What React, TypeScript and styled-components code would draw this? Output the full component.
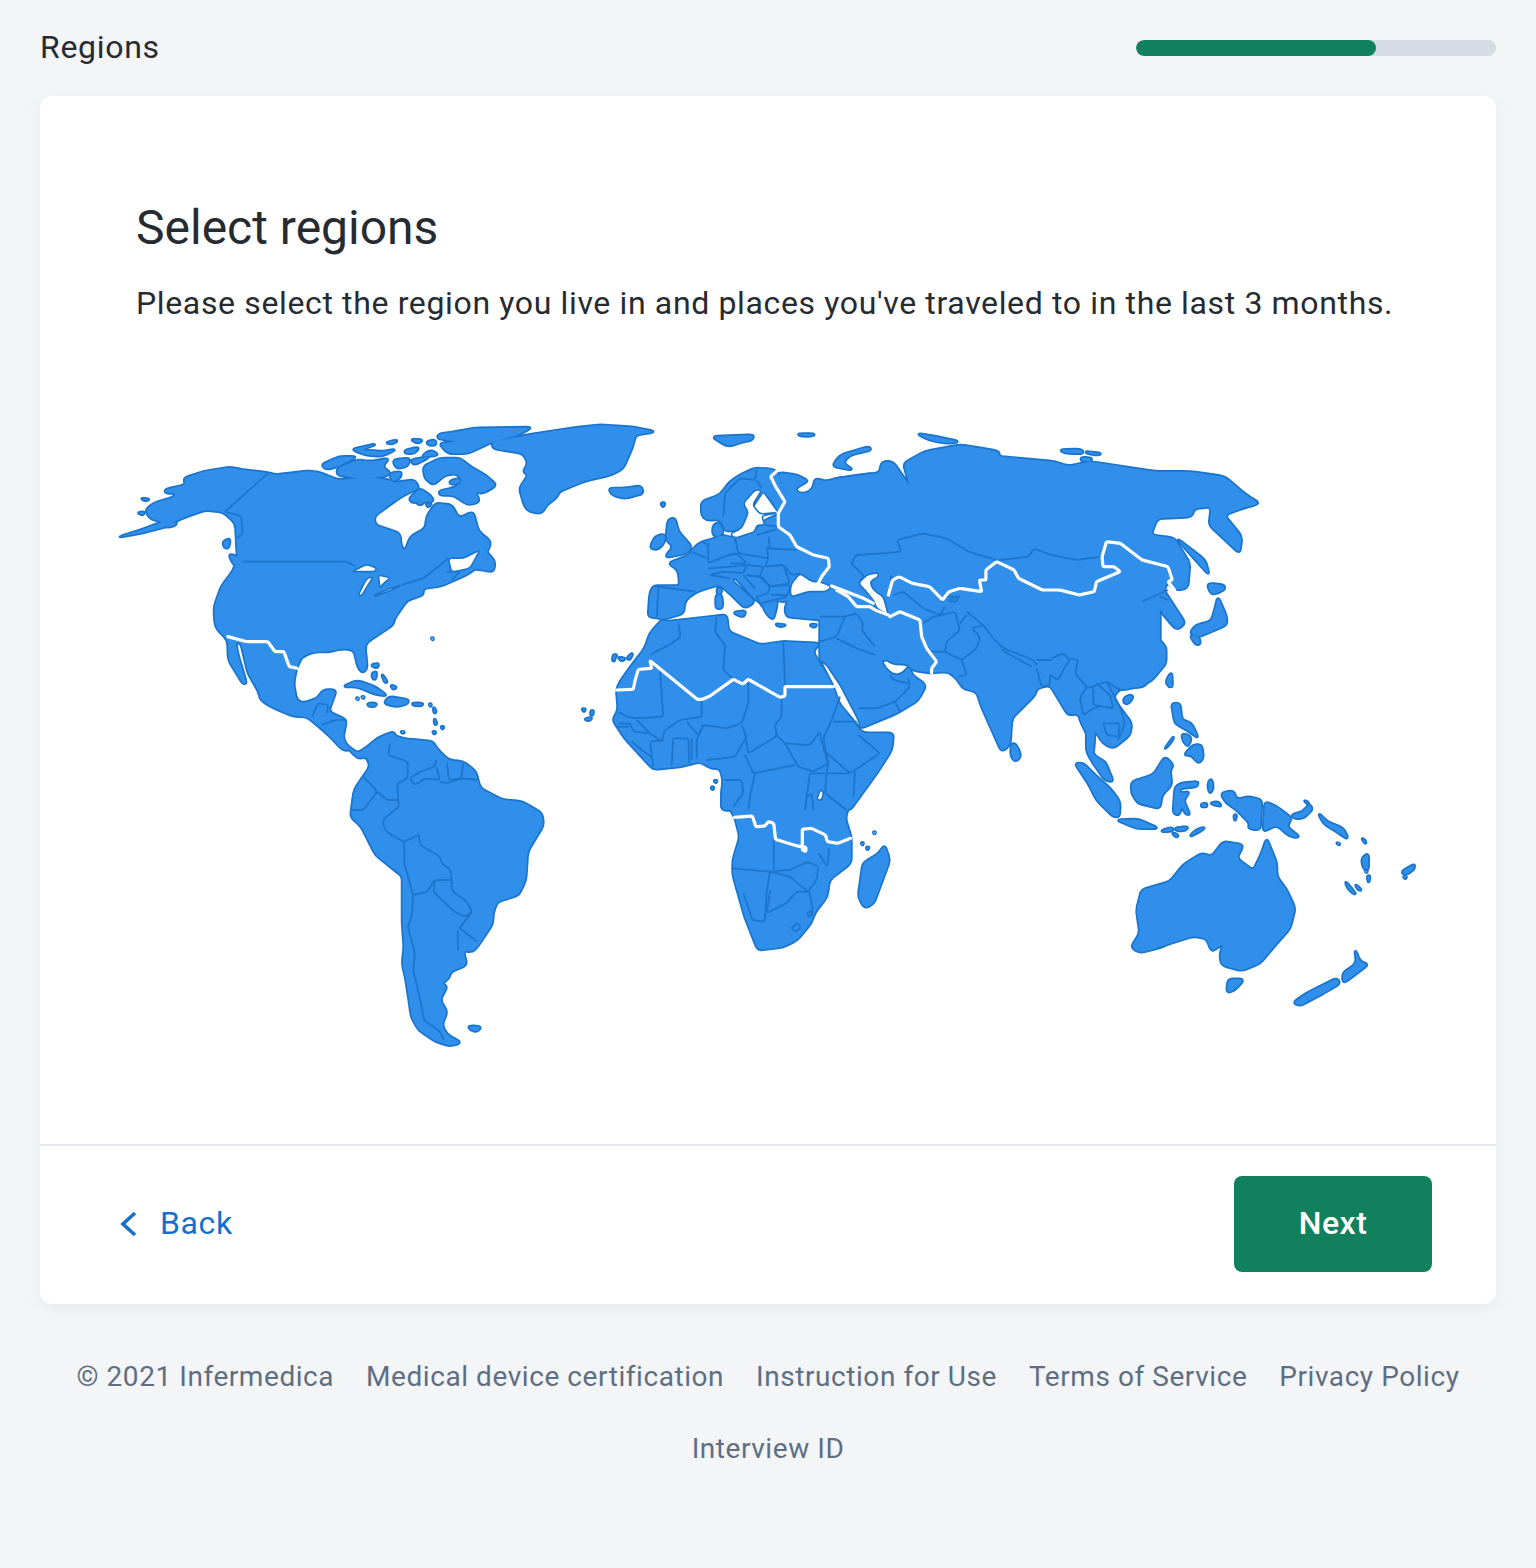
import React from 'react';
import styled, { createGlobalStyle } from 'styled-components';

const GlobalStyle = createGlobalStyle`
  html, body {
    margin: 0;
    background: #f3f5f7;
    font-family: Roboto, "Liberation Sans", sans-serif;
    color: #262b31;
  }
`;

const Page = styled.div`
  width: 1536px;
  min-height: 1568px;
  box-sizing: border-box;
  padding: 0 40px;
`;

const Header = styled.header`
  height: 96px;
  display: flex;
  align-items: center;
  justify-content: space-between;
`;

const PageTitle = styled.div`
  font-size: 32px;
  line-height: 40px;
  letter-spacing: 0.7px;
  margin-top: -2px;
`;

const Track = styled.div`
  width: 360px;
  height: 16px;
  border-radius: 8px;
  background: #d5dce3;
  overflow: hidden;
`;

const Fill = styled.div<{ $percent: number }>`
  width: ${({ $percent }) => $percent}%;
  height: 100%;
  border-radius: 8px;
  background: #11805c;
`;

const Card = styled.main`
  background: #fff;
  border-radius: 12px;
  box-shadow: 0 4px 16px rgba(33, 50, 70, 0.06);
`;

const Content = styled.section`
  height: 1050px;
  box-sizing: border-box;
  padding-top: 100px;
  border-bottom: 2px solid #e4e8ec;
`;

const Heading = styled.h1`
  margin: 0 96px;
  font-size: 48px;
  line-height: 64px;
  font-weight: 400;
`;

const Lead = styled.p`
  margin: 19px 96px 0;
  font-size: 32px;
  line-height: 48px;
  letter-spacing: 0.64px;
  white-space: nowrap;
`;

const MapCanvas = styled.svg`
  display: block;
  width: 1456px;
  height: 680px;
  margin-top: 73px;
`;

const LandEdge = styled.path`
  fill: none;
  stroke: #1a74cc;
  stroke-width: 3.4px;
  stroke-linejoin: round;
  vector-effect: non-scaling-stroke;
`;

const LandFill = styled.path`
  fill: #2f8fea;
`;

const Sea = styled.path`
  fill: #fff;
  stroke: #1a74cc;
  stroke-width: 1.6px;
  stroke-linejoin: round;
  vector-effect: non-scaling-stroke;
`;

const Border = styled.path`
  fill: none;
  stroke: #1c76ce;
  stroke-width: 1.8px;
  stroke-linejoin: round;
  vector-effect: non-scaling-stroke;
`;

const RegionCut = styled.path`
  fill: none;
  stroke: #fff;
  stroke-width: 3.2px;
  stroke-linejoin: round;
  stroke-linecap: round;
  vector-effect: non-scaling-stroke;
`;

const Actions = styled.div`
  height: 158px;
  box-sizing: border-box;
  padding: 30px 64px 32px 80px;
  display: flex;
  align-items: center;
  justify-content: space-between;
`;

const BackLink = styled.a`
  display: flex;
  align-items: center;
  gap: 22px;
  font-size: 32px;
  letter-spacing: 0.6px;
  color: #1470ca;
`;

const BackLabel = styled.span`
  padding-bottom: 2px;
`;

const NextButton = styled.button`
  width: 198px;
  height: 96px;
  border: 0;
  border-radius: 8px;
  padding: 0 0 2px;
  background: #11805c;
  color: #fff;
  font: 500 32px Roboto, sans-serif;
  letter-spacing: 0.5px;
`;

const Footer = styled.footer`
  margin-top: 53px;
  display: flex;
  flex-direction: column;
  gap: 32px;
  font-size: 28px;
  line-height: 40px;
  letter-spacing: 0.56px;
  color: #5f6e82;
`;

const FooterRow = styled.div`
  display: flex;
  justify-content: center;
  gap: 32px;
`;

type Region = {
  transform?: string,
  corner?: number,
  land?: string[],
  seas?: string[],
  borders?: string[],
  cuts?: string[]
};

// each crop of the map was traced in its own coordinates
const Z1 = 'translate(100 410) scale(.357 .3333)';
const Z2 = 'translate(600 420) scale(.4336 .3333)';
const Z3 = 'translate(340 720) scale(.357 .3333)';
const Z4 = 'translate(1060 700) scale(.3333)';
const EU = 'translate(640 460) scale(.3333)';
const SA = 'translate(820 580) scale(.3333)';
const AF = 'translate(610 610) scale(.3333)';
const CA = 'translate(320 425) scale(.3333)';

const regions: Region[] = [
  {
    transform: Z1,
    land: [
      '50,382 120,358 178,335 145,328 132,312 130,298 150,280 205,262 215,250 182,248 185,238 240,225 235,205 290,185 365,172 400,180 470,188 490,195 590,183 620,190 655,205 670,210 720,205 755,200 810,210 825,218 880,210 895,235 860,250 830,270 768,318 770,345 840,370 843,410 855,422 870,380 912,355 915,320 940,280 985,285 1005,325 1045,305 1060,365 1095,395 1085,425 1060,470 1025,495 955,528 905,535 905,555 860,570 825,625 820,645 750,695 742,710 748,775 735,788 722,770 712,720 680,715 640,725 600,725 565,740 550,775 542,820 550,870 570,880 610,865 625,840 662,840 640,905 690,930 680,985 700,1020 680,1020 650,985 625,960 580,920 540,918 480,890 450,870 445,845 415,790 395,700 380,695 385,730 410,820 400,820 380,785 360,750 358,690 330,660 322,640 320,590 340,530 375,480 385,440 380,340 345,305 295,300 240,320 210,335 185,350 120,368',
      '345,395 365,385 360,415 348,412',
      '360,432 385,440 395,470 375,465',
      '115,265 140,268 125,272',
      '105,308 125,306 120,315',
      '180,345 215,335 210,347 185,352',
      '235,320 275,295 245,315',
      '665,175 720,150 760,155 810,145 790,170 815,190 795,200 720,205 665,195',
      '620,165 670,140 720,140 665,170 635,178',
      '950,72 1000,65 1050,55 1210,52 1170,75 1090,100 1030,130 975,130 950,100 1000,95 945,85',
      '705,118 775,102 730,120 790,125 830,118 790,138 745,135',
      '800,98 835,90 820,102',
      '870,88 905,90 890,100',
      '915,95 940,90 940,105 920,105',
      '855,120 895,112 880,130 855,130',
      '925,120 950,135 900,140',
      '820,150 870,145 860,170 830,175',
      '870,150 925,140 880,165',
      '810,190 845,185 840,205 820,215',
      '1100,95 1200,75 1320,55 1400,45 1495,52 1555,65 1500,75 1490,115 1465,175 1430,195 1360,212 1285,245 1280,262 1250,285 1238,310 1205,305 1190,290 1175,235 1200,195 1185,185 1200,160 1185,130 1100,115',
      '1425,235 1470,235 1515,228 1522,250 1470,265 1435,255',
      '680,830 720,812 770,830 805,858 770,852 720,830',
      '795,880 810,860 865,870 860,882 830,890',
      '750,880 775,880 770,890 752,888',
      '875,880 905,880 900,888 878,885',
      '718,864 724,864 722,870', '733,860 740,860 738,866',
      '760,765 780,760 778,772 768,772', '762,790 775,785 772,808 764,806', '788,790 805,815 798,818', '815,825 832,832 820,838',
      '922,882 928,882 926,890', '934,890 942,905 936,910', '936,925 944,940 938,945', '956,950 962,950 960,958', '932,965 939,965 936,972',
      '928,684 934,684 932,690',
      '1438,735 1444,735 1442,750 1436,750', '1452,742 1472,745 1460,752', '1478,745 1492,728 1485,748',
      '1350,897 1360,897 1356,906', '1376,902 1382,902 1380,916 1374,914', '1356,928 1378,922 1372,932'
    ],
    borders: [
      '470,190 350,305',
      '350,305 395,318 400,370 385,385',
      '400,455 690,455 715,468',
      '595,920 610,880 640,885 635,910',
      '620,945 660,930 690,930'
    ],
    cuts: ['358,680 410,695 450,695 470,695 490,725 515,725 530,770 552,775']
  },
  {
    transform: CA,
    land: [
      '310,125 360,100 420,100 450,125 495,150 530,180 490,205 465,200 480,230 445,240 400,210 360,210 358,198 400,190 430,170 410,145 375,150 340,180 315,160',
      '450,430 495,375 525,410 520,440 490,435',
      '268,220 300,190 335,215 340,230 275,232',
      '288,235 315,225 305,240',
      '318,238 335,235 325,246',
      '388,170 415,160 425,172 395,178'
    ],
    seas: [
      '95,440 140,418 170,430 165,440 125,440',
      '115,510 140,460 160,455 135,495 125,512',
      '175,450 212,458 190,475 180,490',
      '160,512 210,490 245,480 215,495 170,512',
      '385,400 430,400 480,375 450,430 395,442'
    ],
    borders: [
      '245,480 310,460 355,425 385,400',
      '380,440 420,440 395,465'
    ]
  },
  {
    transform: Z3,
    land: [
      '0,60 30,85 50,100 75,82 105,55 150,35 155,50 190,58 260,65 270,85 305,122 345,125 380,155 392,205 455,240 510,245 565,280 570,315 525,395 520,480 500,525 440,545 428,580 428,610 385,680 370,695 345,692 355,735 310,755 305,775 285,790 300,800 280,840 300,875 285,915 300,945 340,968 310,978 270,965 220,930 200,890 195,850 185,780 175,730 180,680 175,610 175,470 165,460 100,405 60,320 30,290 40,210 65,170 85,140 75,110 50,115',
      '360,918 395,920 385,935 365,930',
      '1525,375 1540,420 1495,550 1470,565 1452,530 1465,430 1510,400',
      '1048,182 1055,182 1052,188', '1040,202 1047,202 1044,208',
      '1460,368 1466,368 1464,376', '1474,382 1482,382 1478,390', '1494,336 1500,336 1497,342',
      '170,35 180,35 178,40', '262,36 268,36 265,42', '284,20 290,20 287,26'
    ],
    seas: ['1335,240 1345,210 1355,215 1350,240'],
    borders: [
      '140,70 135,105 190,125 190,175 160,190 165,260 125,295 120,310 130,335 160,355 180,365 220,345',
      '220,345 225,375 280,410 285,430 310,450 315,515 355,545 370,575 335,625',
      '180,365 180,430 205,525 245,515 265,480 310,480',
      '265,480 262,515 320,575 350,590 370,575',
      '205,525 200,590 190,620 210,700 205,750 225,840 235,900 280,935 290,960',
      '335,625 385,665', '330,630 330,690',
      '65,170 105,215 65,270 35,270', '105,215 130,240 165,240',
      '270,120 265,140 225,155 195,175 210,195 240,175 280,180 270,140',
      '300,130 305,180 340,175 345,130',
      '280,185 300,190 345,175 385,180',
      '1100,445 1205,455 1260,450 1310,425 1340,440 1335,480 1310,515 1260,470 1205,455',
      '1205,455 1195,515 1190,605 1155,600 1130,520',
      '1215,360 1215,450',
      '1205,510 1195,580 1250,550 1280,515 1315,515 1325,570 1315,590',
      '1340,400 1365,440 1370,385',
      '1265,625 1280,608 1292,622 1275,637 1265,625',
      '1308,580 1322,570 1322,588 1312,590 1308,580'
    ],
    cuts: ['1105,292 1155,288 1165,320 1190,318 1200,305 1215,310 1220,358 1280,378 1305,382 1305,395 1295,390 1295,328 1320,325 1360,345 1365,365 1395,370 1430,355']
  },
  {
    corner: 5,
    land: ['865,780 851,800 845,818 851,837 851,863 829,880 827,897 815,912 811,923 797,940 783,947 758,950 754,940 745,917 733,875 733,860 740,837 735,817 722,797 724,772 800,772']
  },
  {
    transform: AF,
    land: [
      '155,30 170,35 260,25 350,15 355,65 450,105 520,95 630,100 608,125 670,225 690,280 745,355 760,370 850,370 845,420 800,490 720,600 335,600 335,550 340,510 330,475 305,475 270,455 210,470 130,478 45,385 8,330 25,300 20,240 30,215 70,160 105,115 120,70',
      '14,135 20,135 18,142', '8,148 14,148 11,154', '25,142 45,148 35,152', '50,145 68,128 60,148',
      '315,512 321,512 318,518', '304,532 311,532 308,540'
    ],
    seas: ['632,152 650,165 690,225 745,330 752,355 690,280 670,225'],
    borders: [
      '120,135 185,100 212,80 205,40',
      '320,20 315,65 345,105 340,180 370,207',
      '520,95 525,225',
      '150,185 160,320 80,325 50,320 25,305',
      '275,270 275,320 210,330 165,360 155,395 120,370 80,330',
      '415,210 415,280 395,340 350,355 280,345 265,375 230,335',
      '515,265 515,320 495,345 500,375 525,400',
      '405,370 415,430 490,385 500,375',
      '395,345 410,380 375,440 340,445 290,450',
      '280,345 260,390 260,445',
      '190,385 235,385 238,460', '190,385 185,465', '245,385 245,450',
      '160,390 120,395 130,470', '65,395 95,420 125,440',
      '25,340 60,340 70,365 120,370', '20,350 55,350',
      '690,260 665,330 640,385 655,460',
      '525,400 600,405 630,365 635,395 655,460 610,485 565,470 525,400',
      '670,335 740,335',
      '640,420 720,490 810,430 745,375',
      '735,485 730,560',
      '655,460 650,490 720,490',
      '405,435 430,490 555,465',
      '345,510 395,510 400,550 370,590',
      '435,490 420,560 415,600',
      '600,490 590,560 585,600',
      '600,490 650,490 645,550 710,600',
      '585,600 590,560 605,550 610,600'
    ],
    cuts: ['20,240 70,238 75,212 85,178 125,175 120,152 262,268 278,268 300,258 370,208 398,222 415,208 510,262 525,258 525,230 670,230']
  },
  {
    transform: Z2,
    land: [
      '530,180 600,165 645,160 650,125 675,125 715,200 700,130 750,95 830,75 880,85 920,95 920,110 1050,125 1080,140 1110,130 1130,125 1280,155 1360,155 1440,170 1490,225 1522,250 1480,265 1440,285 1480,350 1475,400 1405,315 1410,260 1370,265 1365,290 1285,295 1270,345 1325,355 1360,430 1355,505 1325,510 1310,485 1300,510 1310,530 1350,610 1330,630 1300,585 1280,545 1250,575 1230,565 1250,545 1280,595 1260,620 1305,680 1305,730 1270,785 1210,810 1100,780 700,500 530,300',
      '1305,785 1318,755 1320,800 1312,800',
      '1360,640 1375,615 1410,605 1420,560 1425,530 1445,590 1445,615 1400,640 1380,650',
      '1360,645 1380,650 1385,670 1375,675',
      '1400,490 1440,495 1440,510 1410,525',
      '1330,355 1395,420 1405,465 1360,400',
      '540,130 555,105 620,80 625,90 575,105 560,130 585,150 540,140',
      '258,50 355,45 350,60 330,65 295,80',
      '455,42 495,42 490,48 465,48',
      '730,40 775,50 830,65 800,70 760,60',
      '1060,90 1110,88 1115,100 1075,100',
      '1120,95 1155,100 1150,105 1125,100',
      '1110,112 1135,115 1130,125 1110,122'
    ],
    borders: [
      '580,430 590,405 650,400 695,395 685,360 745,340 800,355 850,395 915,420',
      '920,420 990,410 1000,385 1040,405 1100,420 1155,410',
      '580,430 610,470 600,480',
      '1250,545 1310,510',
      '1290,530 1310,540'
    ],
    cuts: [
      '665,525 675,480 690,470 720,490 760,500 790,540 805,515 830,505 880,515 875,480 890,480 890,450 915,425 955,450 965,475 1020,510 1060,510 1105,525 1140,515 1145,485 1200,455 1185,440 1160,440 1158,410 1168,365 1200,370 1250,420 1310,440 1320,480 1310,485 1325,510'
    ]
  },
  {
    transform: EU,
    land: [
      '240,225 215,240 185,245 155,270 150,285 85,310 115,330 120,378 40,378 30,400 25,470 50,472 70,478 130,460 135,420 170,395 215,380 240,375 275,405 315,445 345,425 275,362 285,352 345,418 365,430 380,462 400,480 412,430 405,420 430,425 445,420 435,445 440,470 548,480 540,550 600,600 750,600 750,100 700,40 650,50 590,55 560,65 525,55 520,85 500,100 475,100 465,85 500,65 500,60 470,45 415,38 440,120 420,160 370,185 345,215 285,235',
      '415,38 395,28 345,25 310,40 270,65 240,105 185,125 185,165 200,180 240,178 258,215 305,205 325,158 370,90 420,160 440,120',
      '218,225 220,195 240,188 250,215 240,228',
      '228,405 245,405 248,445 228,445',
      '232,385 245,385 242,402 232,402',
      '278,458 318,452 310,472',
      '405,492 440,495 420,500',
      '508,495 530,492 525,503',
      '85,178 105,175 115,215 155,260 140,280 75,292 100,260 80,240 80,215',
      '30,265 45,230 75,222 75,245 55,268',
      '62,130 75,128 70,142'
    ],
    seas: [
      '365,90 345,90 310,130 325,158 305,205 270,222 285,235 345,215 350,195 375,195 365,168 412,158 360,162 338,135',
      '450,395 455,370 480,340 515,365 540,365 575,380 560,395 505,395 455,410',
      '655,370 680,345 715,338 715,350 690,365 700,390 730,410 745,465 710,445 700,420 670,385'
    ],
    borders: [
      '350,30 345,60 300,55 255,100 250,170',
      '350,60 365,85',
      '350,225 410,208', '375,195 415,200',
      '285,235 295,280 385,295 380,260 390,268 385,230',
      '205,250 205,310 265,285 295,280',
      '185,245 205,255', '155,275 200,295',
      '385,265 470,270',
      '385,295 375,320 430,315 455,345 480,340',
      '265,285 290,280 320,310 270,310',
      '205,325 270,320 320,315 310,340 250,335 210,345',
      '210,345 270,355',
      '320,315 370,320 360,350 320,345',
      '370,320 430,315 450,370 390,380 365,350',
      '320,345 360,350 390,380 385,400 350,410',
      '310,345 345,385',
      '390,380 450,375 445,405 395,405',
      '350,410 365,440', '365,430 440,410',
      '40,378 165,395', '55,385 50,470'
    ],
    cuts: [
      '412,32 392,50 410,85 435,125 415,160 415,200 450,225 470,260 520,285 565,295 568,320 545,350 535,370',
      '575,378 620,395 670,415 700,430',
      '590,390 625,410 650,440 690,440 705,450 745,465'
    ]
  },
  {
    transform: SA,
    land: [
      '0,240 45,320 120,445 230,400 295,360 318,315 275,285 268,258 245,285 218,285 195,265 170,212 215,250 262,252 278,270 330,278 385,275 410,295 430,325 470,335 485,380 545,515 570,495 575,415 645,345 650,325 690,315 745,405 775,400 800,450 800,515 820,520 825,450 850,490 880,505 930,465 935,430 890,370 880,350 900,325 970,320 1020,270 1020,0 0,0',
      '575,490 590,495 603,530 585,545 572,525',
      '912,355 930,345 940,350 925,372 912,368'
    ],
    borders: [
      '0,110 75,110 110,100 130,130 125,150 165,200',
      '75,110 50,170 0,185',
      '50,175 110,205 165,225',
      '115,385 170,385 225,365 270,320 265,295',
      '225,365 240,395',
      '210,285 220,300 265,310',
      '310,130 340,110 405,95 420,150 380,185 375,215 330,215 310,185',
      '375,215 425,240 470,205 480,170 455,145 490,135',
      '425,240 440,285 415,290',
      '420,130 440,105',
      '220,45 250,35 310,85 360,105 375,80',
      '365,65 380,50 420,50',
      '385,60 415,50 410,65 390,65 385,60',
      '440,95 490,135 520,175 550,205 640,240 650,255',
      '545,210 635,260',
      '650,240 695,240',
      '695,235 730,220 750,240 735,260 715,300 690,285',
      '650,265 665,320 690,315 690,285',
      '750,235 775,240 765,280 800,320',
      '800,320 780,355 790,405 820,385 840,380',
      '820,320 820,375 880,385 870,345 830,310',
      '860,305 900,380 915,430 895,480',
      '850,430 900,430 895,470 860,465 850,430',
      '800,325 860,305 900,330'
    ],
    cuts: [
      '210,110 240,95 300,120 305,170 320,205 350,245 335,265 335,278'
    ]
  },
  {
    transform: Z4,
    land: [
      '50,10 75,40 100,85 85,130 105,170 135,185 160,245 135,240 100,190 80,155 85,110 60,60',
      '45,190 70,190 110,230 150,265 180,305 178,350 160,350 110,300 85,250',
      '170,360 235,358 295,385 230,385',
      '305,392 335,382 340,392 310,395',
      '345,385 385,380 375,392 350,392',
      '335,398 355,405 350,412',
      '388,410 410,388 438,382 410,400',
      '215,245 280,225 315,170 340,195 330,210 335,255 305,285 300,325 235,310 215,280',
      '340,340 345,265 360,250 415,245 410,260 360,265 360,280 390,275 370,300 390,345 375,340 365,315 358,345',
      '445,245 455,238 460,265 450,280 445,265',
      '425,312 440,310 440,320 425,320',
      '448,310 475,305 485,320',
      '482,280 520,272 530,300 565,290 605,300 600,390 565,385 570,370 525,325 500,310',
      '615,305 650,320 695,355 680,380 720,412 690,410 650,375 610,395',
      '522,345 530,345 525,365',
      '695,345 730,335 750,310 730,300 760,325 730,355 700,355',
      '775,338 800,365 850,385 865,418 830,395 790,370',
      '830,428 840,432 835,434',
      '335,10 360,10 365,60 395,70 415,115 390,95 345,70',
      '365,100 395,110 385,140 370,125',
      '372,165 400,135 425,135 430,175 415,190 395,165',
      '312,150 342,108 335,125',
      '213,742 240,700 230,630 245,570 330,545 370,495 425,460 455,470 490,425 550,435 530,475 580,512 605,460 620,415 650,490 650,530 680,570 705,625 690,685 650,730 600,790 545,812 485,795 480,765 490,730 455,755 440,715 400,708 330,730 300,742 240,758',
      '505,838 552,838 525,870 500,878',
      '885,748 900,785 925,793 890,820 850,850 848,820 890,790',
      '700,908 740,880 830,835 840,850 790,880 720,917',
      '855,542 890,585 865,570',
      '885,552 905,570 895,570',
      '1025,515 1065,492 1060,510 1035,525',
      '1030,530 1040,530 1036,536',
      '905,475 925,460 925,510 910,505',
      '905,415 915,420 918,432',
      '915,512 922,512 920,518', '922,528 930,528 926,550'
    ]
  }
];

// turns a traced point list into a path with its corners rounded off
const toPath = (points: string, corner: number, closed: boolean) => {
  const pts = points.split(' ').map(p => p.split(',').map(Number));
  const n = pts.length;
  const toward = (a: number[], b: number[]) => {
    const len = Math.hypot(b[0] - a[0], b[1] - a[1]) || 1;
    const d = Math.min(corner, len * 0.45) / len;
    return [a[0] + (b[0] - a[0]) * d, a[1] + (b[1] - a[1]) * d];
  };
  let d = closed ? '' : `M${pts[0].join(' ')}`;
  for (let i = closed ? 0 : 1; i < (closed ? n : n - 1); i++) {
    const p = pts[i];
    const from = toward(p, pts[(i - 1 + n) % n]);
    const to = toward(p, pts[(i + 1) % n]);
    d += `${d ? 'L' : 'M'}${from[0]} ${from[1]}Q${p[0]} ${p[1]} ${to[0]} ${to[1]}`;
  }
  return closed ? d + 'Z' : d + `L${pts[n - 1].join(' ')}`;
};

const WorldMap: React.FC = () => (
  <MapCanvas viewBox="40 400 1456 680" role="img" aria-label="World map">
    {regions.map((r, i) => (
      <g key={i} transform={r.transform}>
        {r.land?.map((p, j) => <LandEdge key={j} d={toPath(p, r.corner ?? 14, true)}/>)}
      </g>
    ))}
    {regions.map((r, i) => (
      <g key={i} transform={r.transform}>
        {r.land?.map((p, j) => <LandFill key={j} d={toPath(p, r.corner ?? 14, true)}/>)}
      </g>
    ))}
    {regions.map((r, i) => (
      <g key={i} transform={r.transform}>
        {r.seas?.map((p, j) => <Sea key={j} d={toPath(p, 10, true)}/>)}
        {r.borders?.map((p, j) => <Border key={j} d={toPath(p, 8, false)}/>)}
      </g>
    ))}
    {regions.map((r, i) => (
      <g key={i} transform={r.transform}>
        {r.cuts?.map((p, j) => <RegionCut key={j} d={toPath(p, 4, false)}/>)}
      </g>
    ))}
  </MapCanvas>
);

const BackIcon = () => (
  <svg width="18" height="26" viewBox="0 0 18 26" fill="none">
    <polyline points="15,2 3,13 15,24" stroke="#1470ca" strokeWidth="3.6"/>
  </svg>
);

const links = ['© 2021 Infermedica', 'Medical device certification', 'Instruction for Use', 'Terms of Service', 'Privacy Policy'];

const App: React.FC = () => (
  <Page>
    <GlobalStyle/>
    <Header>
      <PageTitle>Regions</PageTitle>
      <Track><Fill $percent={66.7}/></Track>
    </Header>
    <Card>
      <Content>
        <Heading>Select regions</Heading>
        <Lead>Please select the region you live in and places you've traveled to in the last 3 months.</Lead>
        <WorldMap/>
      </Content>
      <Actions>
        <BackLink><BackIcon/><BackLabel>Back</BackLabel></BackLink>
        <NextButton>Next</NextButton>
      </Actions>
    </Card>
    <Footer>
      <FooterRow>
        {links.map(l => <span key={l}>{l}</span>)}
      </FooterRow>
      <FooterRow>
        <span>Interview ID</span>
      </FooterRow>
    </Footer>
  </Page>
);

export default App;
